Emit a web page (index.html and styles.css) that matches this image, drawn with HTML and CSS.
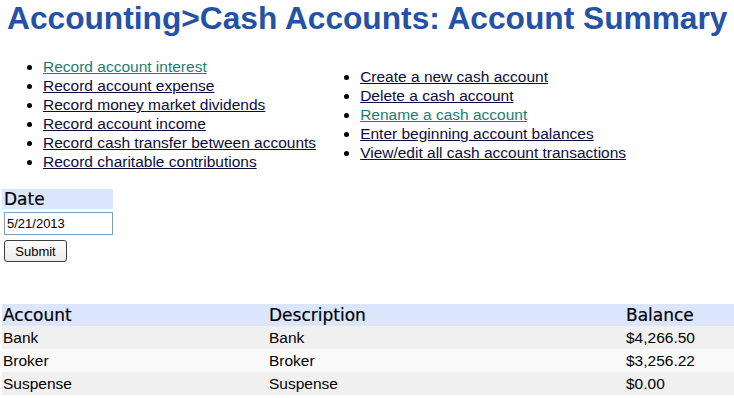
FILE: index.html
```html
<!DOCTYPE html>
<html lang="en">

<head>
    <meta charset="UTF-8">
    <meta name="viewport" content="width=device-width, initial-scale=1.0">
    <title>Account Summary</title>
    <link rel="stylesheet" href="styles.css">
</head>

<body>

    <h1 class="pageTitle">Accounting&gt;Cash Accounts: Account Summary</h1>

    <div class="actions">
        <ul class="actionList">
            <li><a class="seen" href="#">Record account interest</a></li>
            <li><a href="#">Record account expense</a></li>
            <li><a href="#">Record money market dividends</a></li>
            <li><a href="#">Record account income</a></li>
            <li><a href="#">Record cash transfer between accounts</a></li>
            <li><a href="#">Record charitable contributions</a></li>
        </ul>
        <ul class="actionList">
            <li><a href="#">Create a new cash account</a></li>
            <li><a href="#">Delete a cash account</a></li>
            <li><a class="seen" href="#">Rename a cash account</a></li>
            <li><a href="#">Enter beginning account balances</a></li>
            <li><a href="#">View/edit all cash account transactions</a></li>
        </ul>
    </div>

    <form class="dateForm">
        <div class="colHead">Date</div>
        <input class="dateInput" type="text" value="5/21/2013">
        <button class="submitBtn" type="button">Submit</button>
    </form>

    <table class="summary">
        <thead>
            <tr>
                <th class="colAccount">Account</th>
                <th class="colDesc">Description</th>
                <th class="colBalance">Balance</th>
            </tr>
        </thead>
        <tbody>
            <tr><td>Bank</td><td>Bank</td><td>$4,266.50</td></tr>
            <tr><td>Broker</td><td>Broker</td><td>$3,256.22</td></tr>
            <tr><td>Suspense</td><td>Suspense</td><td>$0.00</td></tr>
        </tbody>
    </table>

</body>

</html>
```

FILE: styles.css
```css
body {
    margin: 0;
    padding: 0 0 0 2px;
    font-family: "Liberation Sans", Arial, sans-serif;
    font-size: 15.5px;
    color: #000;
    background: #fff;
}

.pageTitle {
    margin: 0;
    padding-left: 5px;
    font-size: 31.7px;
    line-height: 36px;
    font-weight: bold;
    color: #2452a4;
    white-space: nowrap;
}

.actions {
    display: flex;
    align-items: center;
    gap: 3px;
    margin-top: 21px;
}

.actionList {
    margin: 0;
    padding-left: 41px;
    line-height: 19px;
}

.actionList a {
    color: #0c0c40;
}

.actionList a.seen {
    color: #1e7b70;
    text-decoration-color: #1e7b70;
}

.dateForm {
    display: flex;
    flex-direction: column;
    align-items: flex-start;
    margin-top: 18px;
}

.colHead {
    font-family: "DejaVu Sans", Verdana, sans-serif;
    font-size: 17px;
    line-height: 20px;
    background: #dbe5fb;
    width: 111px;
    padding-left: 2px;
    box-sizing: border-box;
    -webkit-text-stroke: 0.2px #000;
}

.dateInput {
    margin: 3px 0 0 2px;
    width: 109px;
    height: 23px;
    box-sizing: border-box;
    border: 1px solid #7f9db9;
    font-family: "Liberation Sans", Arial, sans-serif;
    font-size: 13px;
    padding: 0 2px;
}

.submitBtn {
    margin: 5px 0 0 2px;
    width: 63px;
    height: 22px;
    font-family: "Liberation Sans", Arial, sans-serif;
    font-size: 13px;
    border: 1px solid #3c3c3c;
    border-radius: 3px;
    background: linear-gradient(#fdfdfd, #ececec);
    padding: 0;
}

.summary {
    width: 100%;
    margin-top: 42px;
    border-collapse: collapse;
}

.summary th {
    font-family: "DejaVu Sans", Verdana, sans-serif;
    font-size: 17px;
    font-weight: normal;
    text-align: left;
    background: #dbe5fb;
    height: 22px;
    padding: 0 1px;
    -webkit-text-stroke: 0.2px #000;
}

.summary td {
    height: 23px;
    padding: 0 1px;
}

.summary tbody tr:nth-child(odd) {
    background: #f0f0f0;
}

.summary tbody tr:nth-child(even) {
    background: #fafafa;
}

.colAccount {
    width: 264px;
}

.colDesc {
    width: 355px;
}
```
